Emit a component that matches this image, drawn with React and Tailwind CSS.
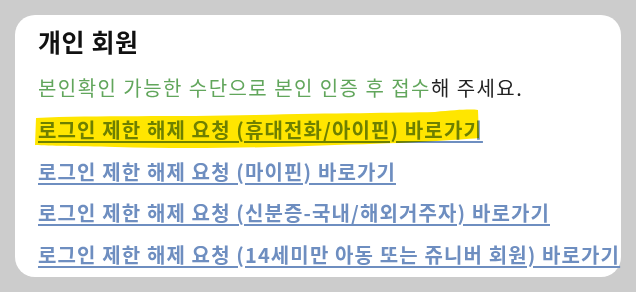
import React from "react";

const font = { fontFamily: '"Noto Sans CJK KR", "Noto Sans", sans-serif' };

export default function App() {
  const links = [
    "로그인 제한 해제 요청 (휴대전화/아이핀) 바로가기",
    "로그인 제한 해제 요청 (마이핀) 바로가기",
    "로그인 제한 해제 요청 (신분증-국내/해외거주자) 바로가기",
    "로그인 제한 해제 요청 (14세미만 아동 또는 쥬니버 회원) 바로가기",
  ];
  return (
    <div className="w-[636px] h-[292px] bg-[#cccccc] p-[15px] overflow-hidden" style={font}>
      <div className="w-[606px] h-[262px] bg-white rounded-[20px] pl-[23px] pt-[11px]">
        <h2 className="text-[25px] leading-[30px] font-bold tracking-[0.6px] text-[#111111] whitespace-nowrap">개인 회원</h2>
        <p className="mt-[17px] text-[20px] leading-[30px] tracking-[1.45px] text-[#222222] whitespace-nowrap">
          <span className="text-[#62a65c]">본인확인 가능한 수단으로 본인 인증 후 접수</span>해 주세요.
        </p>
        <div className="mt-[12px] flex flex-col gap-[11.5px]">
          {links.map((t, i) => (
            <div key={i} className="relative h-[30px] whitespace-nowrap">
              <a
                href="#"
                className="text-[20px] leading-[30px] font-bold tracking-[1.12px] text-[#6e8ec0] underline decoration-2 underline-offset-[3px]"
              >
                {t}
              </a>
              {i === 0 && (
                <svg
                  className="absolute left-[-3px] top-[-6px] mix-blend-multiply pointer-events-none"
                  width="446"
                  height="42"
                  viewBox="0 0 446 42"
                >
                  <path
                    d="M1 9 C 60 6, 140 8, 220 6 C 300 4, 360 4, 400 3 C 420 1, 435 0, 443 1 L 444 29 C 420 31, 380 34, 300 36 C 220 39, 150 40, 80 38 C 40 37, 15 37, 0 36 Z"
                    fill="#ffe600"
                  />
                </svg>
              )}
            </div>
          ))}
        </div>
      </div>
    </div>
  );
}
